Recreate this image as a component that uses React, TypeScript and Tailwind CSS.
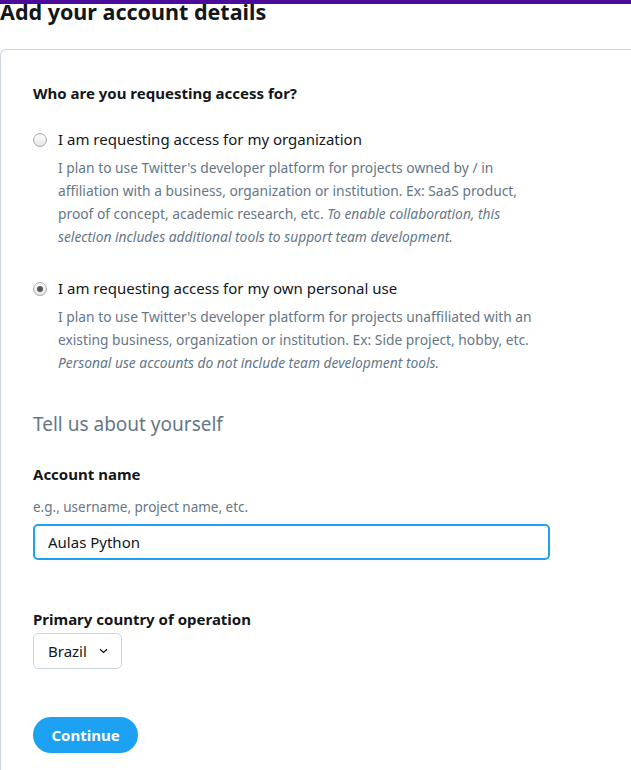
import React from "react";

const font = { fontFamily: '"Segoe UI", "Noto Sans", "Open Sans", Arial, sans-serif' };

function Radio({ checked }: { checked?: boolean }) {
  return (
    <span className="mt-[1px] flex h-[14px] w-[14px] shrink-0 items-center justify-center rounded-full border border-[#a9a9a9] bg-gradient-to-b from-[#fdfdfd] to-[#e6e6e6]">
      {checked && <span className="h-[6px] w-[6px] rounded-full bg-[#555]" />}
    </span>
  );
}

export default function App() {
  return (
    <div className="min-h-[770px] w-[631px] overflow-hidden bg-white text-[#14171a]" style={font}>
      <div className="h-[4px] w-full bg-[#4b0b9b]" />
      <h1 className="mt-[-7px] text-[21.5px] font-bold leading-[30px] text-[#14171a]">Add your account details</h1>
      <div className="mt-[22px] w-[700px] rounded-tl-[6px] border-l border-t border-[#ccd6dd] pb-[20px] pl-[32px] pt-[33px]">
        <div className="text-[15px] font-bold leading-[20px]">Who are you requesting access for?</div>

        <div className="mt-[26px]">
          <div className="flex items-center gap-[11px]">
            <Radio />
            <span className="text-[15px] leading-[20px]">I am requesting access for my organization</span>
          </div>
          <div className="ml-[25px] mt-[7px] text-[13.8px] leading-[23px] text-[#657786]">
            <div>I plan to use Twitter's developer platform for projects owned by / in</div>
            <div>affiliation with a business, organization or institution. Ex: SaaS product,</div>
            <div>
              proof of concept, academic research, etc. <i>To enable collaboration, this</i>
            </div>
            <div>
              <i>selection includes additional tools to support team development.</i>
            </div>
          </div>
        </div>

        <div className="mt-[30px]">
          <div className="flex items-center gap-[11px]">
            <Radio checked />
            <span className="text-[15px] leading-[20px]">I am requesting access for my own personal use</span>
          </div>
          <div className="ml-[25px] mt-[7px] text-[13.8px] leading-[23px] text-[#657786]">
            <div>I plan to use Twitter's developer platform for projects unaffiliated with an</div>
            <div>existing business, organization or institution. Ex: Side project, hobby, etc.</div>
            <div>
              <i>Personal use accounts do not include team development tools.</i>
            </div>
          </div>
        </div>

        <div className="mt-[38px] text-[19px] leading-[24px] text-[#657786]">Tell us about yourself</div>

        <div className="mt-[28px] text-[15px] font-bold leading-[20px]">Account name</div>
        <div className="mt-[13px] text-[13.5px] leading-[20px] text-[#657786]">e.g., username, project name, etc.</div>
        <div className="mt-[7px] flex h-[36px] w-[517px] items-center rounded-[5px] border-2 border-[#1da1f2] px-[13px] text-[15px]">
          Aulas Python
        </div>

        <div className="mt-[49px] text-[15px] font-bold leading-[20px]">Primary country of operation</div>
        <div className="mt-[4px] flex h-[36px] w-[89px] items-center rounded-[5px] border border-[#ccd6dd] pl-[14px] text-[15px]">
          <span>Brazil</span>
          <svg className="ml-[12px]" width="9" height="6" viewBox="0 0 9 6" fill="none">
            <path d="M1 1.2 L4.5 4.5 L8 1.2" stroke="#14171a" strokeWidth="1.2" />
          </svg>
        </div>

        <button className="mt-[48px] flex h-[36px] w-[105px] items-center justify-center rounded-full bg-[#1da1f2] text-[15px] font-bold text-white">
          Continue
        </button>
      </div>
    </div>
  );
}
